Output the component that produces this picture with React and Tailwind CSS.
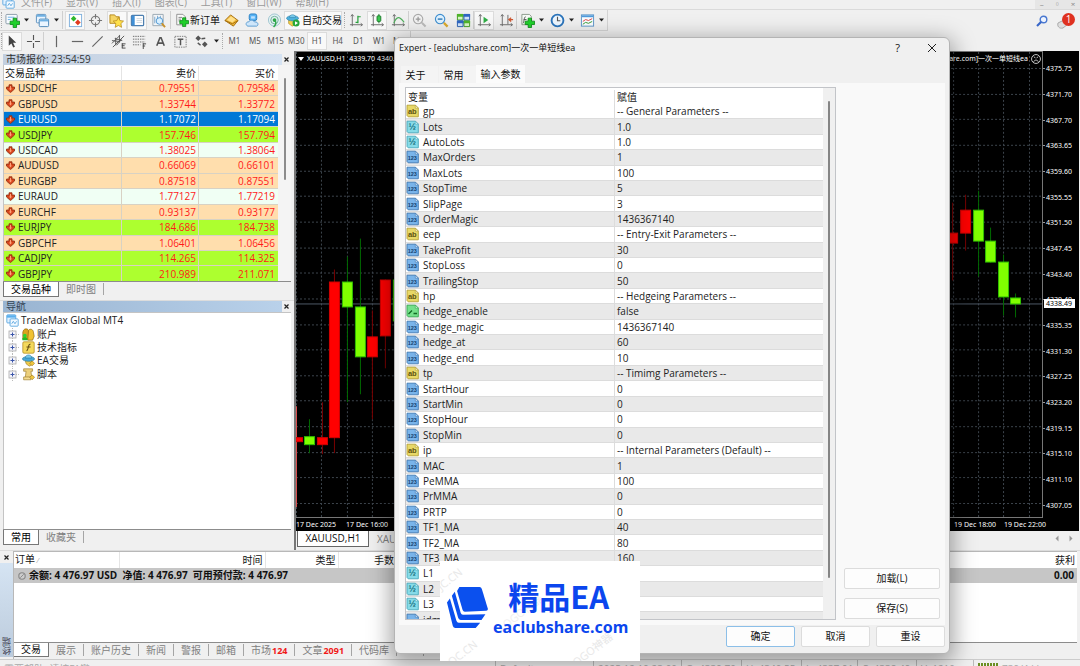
import React from 'react';

const quotes = [
  ['USDCHF', '0.79551', '0.79584', 'bg-[#ffdead]'],
  ['GBPUSD', '1.33744', '1.33772', 'bg-[#ffdead]'],
  ['EURUSD', '1.17072', '1.17094', 'bg-[#0078d7]'],
  ['USDJPY', '157.746', '157.794', 'bg-[#adff2f]'],
  ['USDCAD', '1.38025', '1.38064', 'bg-[#f0fff4]'],
  ['AUDUSD', '0.66069', '0.66101', 'bg-[#ffdead]'],
  ['EURGBP', '0.87518', '0.87551', 'bg-[#ffdead]'],
  ['EURAUD', '1.77127', '1.77219', 'bg-[#f0fff4]'],
  ['EURCHF', '0.93137', '0.93177', 'bg-[#ffdead]'],
  ['EURJPY', '184.686', '184.738', 'bg-[#adff2f]'],
  ['GBPCHF', '1.06401', '1.06456', 'bg-[#ffdead]'],
  ['CADJPY', '114.265', '114.325', 'bg-[#adff2f]'],
  ['GBPJPY', '210.989', '211.071', 'bg-[#adff2f]'],
];

const params = [
  ['ab', 'gp', '-- General Parameters --'],
  ['half', 'Lots', '1.0'],
  ['half', 'AutoLots', '1.0'],
  ['num', 'MaxOrders', '1'],
  ['num', 'MaxLots', '100'],
  ['num', 'StopTime', '5'],
  ['num', 'SlipPage', '3'],
  ['num', 'OrderMagic', '1436367140'],
  ['ab', 'eep', '-- Entry-Exit Parameters --'],
  ['num', 'TakeProfit', '30'],
  ['num', 'StopLoss', '0'],
  ['num', 'TrailingStop', '50'],
  ['ab', 'hp', '-- Hedgeing Parameters --'],
  ['bool', 'hedge_enable', 'false'],
  ['num', 'hedge_magic', '1436367140'],
  ['num', 'hedge_at', '60'],
  ['num', 'hedge_end', '10'],
  ['ab', 'tp', '-- Timimg Parameters --'],
  ['num', 'StartHour', '0'],
  ['num', 'StartMin', '0'],
  ['num', 'StopHour', '0'],
  ['num', 'StopMin', '0'],
  ['ab', 'ip', '-- Internal Parameters (Default) --'],
  ['num', 'MAC', '1'],
  ['num', 'PeMMA', '100'],
  ['num', 'PrMMA', '0'],
  ['num', 'PRTP', '0'],
  ['num', 'TF1_MA', '40'],
  ['num', 'TF2_MA', '80'],
  ['num', 'TF3_MA', '160'],
  ['half', 'L1', ''],
  ['half', 'L2', ''],
  ['half', 'L3', ''],
  ['num', 'idm', ''],
];

const prices = ['4375.75', '4371.70', '4367.70', '4363.65', '4359.60', '4355.55', '4351.50', '4347.45', '4343.40', '4339.40', '4335.35', '4331.30', '4327.25', '4323.20', '4319.15', '4315.10', '4311.10', '4307.05'];

// x, open/close top, bottom, wick top, wick bottom, direction (plot coordinates)
const candles = [
  [-4, 386, 391, 386, 391, 'r'],
  [8, 385, 394, 368, 402, 'g'],
  [21, 386, 394, 351, 403, 'r'],
  [33, 230, 387, 218, 402, 'r'],
  [46, 230, 256, 205, 351, 'g'],
  [59, 255, 306, 187, 343, 'g'],
  [71, 285, 306, 259, 368, 'r'],
  [84, 228, 285, 228, 317, 'r'],
  [97, 228, 270, 220, 290, 'g'],
  [652, 181, 192, 151, 229, 'r'],
  [665, 158, 182, 143, 199, 'r'],
  [678, 158, 190, 139, 225, 'g'],
  [690, 189, 211, 176, 211, 'g'],
  [703, 210, 246, 203, 264, 'g'],
  [715, 246, 253, 242, 266, 'g'],
];

const Svg = ({ children, size = 16, className = '' }) => (
  <svg width={size} height={size} viewBox="0 0 16 16" fill="none" className={`shrink-0 ${className}`} aria-hidden="true">{children}</svg>
);

const Plus = ({ x = 5, y = 5 }) => (
  <path transform={`translate(${x} ${y})`} d="M3.700 0.500h3.600v3.200h3.200v3.600h-3.200v3.200h-3.600v-3.200h-3.200v-3.600h3.200z" fill="#1fd02a" stroke="#0d8a18" strokeWidth=".9" />
);

const Axes = () => <path d="M3.500 2v12M1 12.500h13M2 3.500l1.500-2 1.500 2M12.500 11l2 1.500-2 1.500" stroke="#6b6b6b" />;

const icons = {
  newChart: <><rect x="1" y="1.500" width="12" height="10" rx="1" fill="#f7fbff" stroke="#8a9aa8" /><path d="M3 4.500h7M3 7h3" stroke="#6bb3e8" /><Plus /></>,
  windows: <><rect x="1.500" y="1.500" width="10" height="9" rx="1" fill="#eaf5ff" stroke="#5b8fbd" /><path d="M2 3h9" stroke="#6fb1e3" strokeWidth="2" /><rect x="4.500" y="6.500" width="10" height="8" rx="1" fill="#eaf5ff" stroke="#4b86b8" /><path d="M5 8h9" stroke="#6fb1e3" strokeWidth="2" /></>,
  market: <><rect x="1.500" y="1.500" width="13" height="13" fill="#fff" stroke="#7fb0dc" /><path d="M6 3l3 3-3 3-3-3z" fill="#2eb82e" /><path d="M10.500 7l3 3-3 3-3-3z" fill="#e03a1e" /></>,
  cross: <><circle cx="8" cy="8" r="4.500" stroke="#777" strokeWidth="1.200" /><path d="M8 1v5M8 10v5M1 8h5M10 8h5" stroke="#777" strokeWidth="1.200" /></>,
  starFolder: <><path d="M1 2h5l1.500 2H11v7H1z" fill="#f5d565" stroke="#b68a1d" /><path d="M10 4.500l1.700 3.600 3.800.5-2.800 2.700.7 4-3.400-2-3.400 2 .7-4-2.800-2.700 3.800-.5z" fill="#ffe14a" stroke="#b68a1d" strokeWidth=".8" /></>,
  panel: <><rect x="1.500" y="2.500" width="13" height="11" rx="1" fill="#fff" stroke="#4d7fb0" strokeWidth="1.300" /><rect x="2" y="3" width="3" height="10" fill="#3f8fd6" /><path d="M7 6h6M7 8h6M7 10h6" stroke="#cfd8e0" /></>,
  tester: <><path d="M2 1.500h11v12H2z" fill="#f4f6f8" stroke="#9aa7b2" /><path d="M4 4v7M7 3v4M10 3v3" stroke="#7aa6cc" /><circle cx="9" cy="8.500" r="3.500" fill="#d8efff" stroke="#4d94cf" /><path d="M11.500 11l3.500 4" stroke="#c8912a" strokeWidth="2" /></>,
  order: <><path d="M2 1.500h7l3 3v9H2z" fill="#fafafa" stroke="#888" /><path d="M4 5h4M4 7h3M4 9h2" stroke="#777" /><Plus /></>,
  gold: <><path d="M1 8l6-6 8 6-5 6z" fill="#f0b93a" stroke="#a36e10" /><path d="M1 8l8 3.500L15 8" stroke="#a36e10" /><path d="M3 7.500l4.500-4 5 3.500-3.500 3z" fill="#ffe08a" /></>,
  cloud: <><rect x="4.500" y="1" width="8" height="7" rx="2" fill="#58b3f5" stroke="#287fc2" /><path d="M6.500 3.500h4v2.500h-4z" fill="#bfe3ff" /><path d="M3 14c-3-1-2-5 1-4.500 1-2.500 5-2.500 6 0 4-.5 5 3.500 2.500 4.500z" fill="#cfe6fa" stroke="#5b9bd0" /></>,
  signal: <><circle cx="8" cy="7.500" r="6.500" fill="#e4f1f3" stroke="#9dc4cf" /><circle cx="8" cy="7.500" r="4" stroke="#6fae9b" /><circle cx="8" cy="7.500" r="2" fill="#2fa84a" /><path d="M8 8c3 2 1 5-1 7" stroke="#2fa84a" strokeWidth="1.600" /></>,
  auto: <><path d="M3 7h9l-1 6-4 2-4-3z" fill="#f2cf4a" stroke="#ad8419" strokeWidth=".7" /><ellipse cx="7.500" cy="6" rx="6.800" ry="3" fill="#4eb0dd" stroke="#2a7fa8" strokeWidth=".7" /><path d="M4 5c0-4 7-4 7 0z" fill="#7fd0f0" stroke="#2a7fa8" strokeWidth=".7" /><circle cx="11.500" cy="11.500" r="4" fill="#28a838" /><path d="M10.300 9.300l3.400 2.200-3.400 2.200z" fill="#fff" /></>,
  bars: <><Axes /><path d="M9.500 3v8M9.500 4h3M7 10h2.500" stroke="#28a03c" strokeWidth="1.300" /></>,
  candles: <><Axes /><path d="M9.500 1v10" stroke="#1c7a2c" /><rect x="7.500" y="3" width="4" height="6" rx="1" fill="#3cc850" stroke="#1c7a2c" /></>,
  line: <><Axes /><path d="M3 11c3-8 6-8 11-1" stroke="#4fae5c" strokeWidth="1.200" /></>,
  zoomIn: <><circle cx="6.500" cy="6.500" r="5" fill="#f2f2f2" stroke="#aaa" strokeWidth="1.200" /><path d="M4 6.500h5M6.500 4v5" stroke="#999" strokeWidth="1.300" /><path d="M10.500 10.500l4 4" stroke="#bbb" strokeWidth="2.200" /></>,
  zoomOut: <><circle cx="6.500" cy="6.500" r="5" fill="#dff2ff" stroke="#3e8ed0" strokeWidth="1.200" /><path d="M4 6.500h5" stroke="#2f79b8" strokeWidth="1.500" /><path d="M10.500 10.500l4 4" stroke="#d9a92e" strokeWidth="2.400" /></>,
  tile: <><path d="M1.500 1.500h6v6h-6zM8.500 8.500h6v6h-6z" fill="#d7f5c8" stroke="#3f9c1f" /><path d="M8.500 1.500h6v6h-6zM1.500 8.500h6v6h-6z" fill="#cfe3fb" stroke="#2a5fb0" /><path d="M1 2.500h7M8 9.500h7" stroke="#4fb52a" strokeWidth="3" /><path d="M8 2.500h7M1 9.500h7" stroke="#2f66c4" strokeWidth="3" /></>,
  scroll: <><Axes /><path d="M7 4l5 3.500-5 3.500z" fill="#2fae45" /></>,
  shift: <><Axes /><path d="M9.500 2v10" stroke="#6b6b6b" /><path d="M15 7h-4m2-2l-2.500 2L13 9" stroke="#cf5730" strokeWidth="1.300" /></>,
  indicator: <><path d="M2 1.500h8l2 2v9H2z" fill="#f6fbf6" stroke="#8b9a8b" /><path d="M6 4c-2 0-1.500 7-3 7M4 7h3" stroke="#555" /><Plus /></>,
  clock: <><circle cx="8" cy="8" r="6.300" fill="#eef7ff" stroke="#2b74bb" strokeWidth="2" /><path d="M8 4v4.300h3" stroke="#555" strokeWidth="1.200" /></>,
  template: <><rect x="1.500" y="2" width="13" height="12" fill="#fafdff" stroke="#5a94c8" /><path d="M2 3.500h12" stroke="#4f9adb" strokeWidth="2" /><path d="M3 9l3-2 3 1 4-2" stroke="#d44" /><path d="M3 12l3-2 3 1 4-2" stroke="#393" /></>,
  cursor: <path d="M4 1.500v11l2.800-2.500 2 4.500 1.800-.8-2-4.400H12z" fill="#444" />,
  plusLine: <path d="M8 1v5.500M8 9.500V15M1 8h5.500M9.500 8H15" stroke="#555" strokeWidth="1.200" />,
  vline: <path d="M8 2v12" stroke="#666" strokeWidth="1.300" />,
  hline: <path d="M2 8h12" stroke="#666" strokeWidth="1.300" />,
  slash: <path d="M2.500 13.500l11-11" stroke="#666" strokeWidth="1.200" />,
  pitch: <><path d="M1 10l8-8M2 14L14 2M1 7l8 1M4 5l8 2M6 12l5-6M9 1v8M5 4v8" stroke="#555" /><path d="M11.500 10.500h4M11.500 12.500h3M11.500 15h4M12 10v5" stroke="#444" /></>,
  fib: <><path d="M1 2.500h13M1 5.500h13M1 8.500h13M1 11.500h8" stroke="#666" strokeDasharray="1.500 1" /><path d="M11.500 10.500H15M11.500 12.800H14M12 10v6" stroke="#444" /></>,
  textA: <path d="M4 12.500L7.400 4h1.200l3.400 8.500M5.500 9.700h5" stroke="#555" strokeWidth="1.700" />,
  textT: <><rect x="2" y="2.500" width="12" height="11.500" stroke="#777" strokeDasharray="1.500 1" /><path d="M5 5.500h6M8 5.500V12" stroke="#555" strokeWidth="1.600" /></>,
  shapes: <><path d="M4.500 1.500l3 3-3 3-3-3zM11.500 8l3 3-3 3-3-3z" fill="#555" /><path d="M8 5l4-.5M4 9.500l3 2.500" stroke="#555" strokeWidth="1.500" /></>,
};

const Icon = ({ name, size = 15 }) => <Svg size={size}>{icons[name]}</Svg>;

const Tool = ({ name, active }) => (
  <button aria-label={name} className={`flex h-[19px] w-5 shrink-0 items-center justify-center ${active ? 'border border-[#dcdcdc] bg-[#f9f9f9]' : ''}`}><Icon name={name} /></button>
);
const Caret = () => <svg width="10" height="6" viewBox="0 0 10 6" className="shrink-0"><path d="M2 1.500h5L4.500 4.500z" fill="#222" /></svg>;
const Sep = () => <span className="h-[18px] w-px shrink-0 bg-[#cfcfcf]" />;
const Grip = () => <span className="h-4 w-px shrink-0 border-l border-dotted border-[#aaa]" />;
const Close = ({ size = 9 }) => <svg width={size} height={size} viewBox="0 0 9 9"><path d="M2.500 2.500l4 4M6.500 2.500l-4 4" stroke="#222" strokeWidth="1.200" /></svg>;

const MtIcon = () => (
  <Svg size={13}><rect x="1" y="1" width="11" height="10" rx="1" fill="#dff0ff" stroke="#4d9fdc" /><path d="M1 3h11" stroke="#5ab0ee" strokeWidth="3" /><rect x="5" y="6" width="10" height="9" rx="1" fill="#f2f9ff" stroke="#4d9fdc" /><path d="M7 12l2-3 2 3 2-3" stroke="#4d9fdc" /></Svg>
);

const treeIcons = {
  accounts: <><path d="M2 2.500C4 0 8 1 8 3.500V14H1V5z" fill="#dba31c" stroke="#8d6508" strokeWidth=".8" /><path d="M8 3c2-3 6-1 6 2l1 5-2 5H7z" fill="#f1c232" stroke="#8d6508" strokeWidth=".8" /><circle cx="3.500" cy="9.500" r="2.300" fill="#2fd22f" /><path d="M.5 15v-2c1-2 5-2 6 0v2z" fill="#22bb22" /></>,
  func: <><rect x="1" y="1" width="14" height="14" rx="1.500" fill="#f4d95c" stroke="#b8922a" /><path d="M10.500 4C7 3 8.500 12 5.500 12M5.500 7.500h5" stroke="#665015" strokeWidth="1.300" /></>,
  expert: <><path d="M4 8h8l1 5-4 2-4-3z" fill="#ecc94b" stroke="#9a7418" strokeWidth=".7" /><ellipse cx="8" cy="6" rx="7.500" ry="3" fill="#48a8d8" stroke="#22789f" strokeWidth=".7" /><path d="M4 5c0-5 8-5 8 0z" fill="#76c8ec" stroke="#22789f" strokeWidth=".7" /><path d="M12.500 8.500l3 3-3 3-3-3z" fill="#f0c63c" stroke="#94701a" strokeWidth=".7" /></>,
  script: <><path d="M2 1h11v3h-2l1 8H4l1-8H2z" fill="#ecd07c" stroke="#9a7a2a" strokeWidth=".8" /><path d="M2 11h9v3.500H2z" fill="#f5dd90" stroke="#9a7a2a" strokeWidth=".8" /><path d="M12.500 8.500l3 3-3 3-3-3z" fill="#f0c63c" stroke="#94701a" strokeWidth=".7" /></>,
};

const typeStyle = {
  ab: ['#e8d866', '#b5a136', '#5c5210', 'ab'],
  half: ['#86dbe8', '#4aa9bb', '#15707f', '½'],
  num: ['#79b4ea', '#4079b3', '#12406f', '123'],
  bool: ['#74e08a', '#36a850', '#116a24', ''],
};
const TypeIcon = ({ type }) => {
  const [fill, stroke, ink, label] = typeStyle[type];
  return (
    <svg width="13" height="14" viewBox="0 0 13 14" className="shrink-0" aria-hidden="true">
      <path d="M1 1.200h8.500L12.300 4v8.800H2.200L1 11.500z" fill={fill} stroke={stroke} strokeWidth=".9" strokeLinejoin="round" />
      <path d="M9.300 1.200V4.200H12.300z" fill="#fff" fillOpacity=".7" stroke={stroke} strokeWidth=".6" />
      {type === 'bool' ? (
        <path d="M2.500 10L6 6.500m1.500 3h3.500" stroke={ink} strokeWidth="1.300" fill="none" />
      ) : (
        <text x="6.300" y={type === 'num' ? 9.500 : 9.800} textAnchor="middle" fontFamily="Liberation Sans" fontWeight="700" fontSize={type === 'ab' ? 7.500 : type === 'half' ? 9 : 5.500} fill={ink}>{label}</text>
      )}
    </svg>
  );
};

const Arrow = () => (
  <svg width="9" height="9" viewBox="0 0 9 9" className="shrink-0"><path d="M3 .8h3v2.200h2.500v2L4.500 8.600.5 5V3H3z" fill="#d9451c" stroke="#8e2c10" strokeWidth=".8" strokeLinejoin="round" /><path d="M4 2h1v2.500h1L4.500 6.500 3 4.500h1z" fill="#ffa27a" /></svg>
);

const Tabs = ({ items }) => (
  <div role="tablist" className="flex h-[15px] items-start border-t border-[#8c8c8c]">
    {items.map((t, i) => (
      <button key={t} role="tab" aria-selected={i === 0} className={i === 0
        ? 'h-[15px] border border-t-0 border-[#777] bg-white px-[7px] leading-[13px] text-black'
        : 'my-px h-[12px] border-r border-[#a5a5a5] px-[7px] leading-[12px] text-[#808080]'}>{t}</button>
    ))}
  </div>
);

function Toolbars() {
  const menus = ['文件(F)', '显示(V)', '插入(I)', '图表(C)', '工具(T)', '窗口(W)', '帮助(H)'];
  return (
    <header className="shrink-0 bg-[#f0f0f0]">
      <div className="flex h-[10px] items-end justify-between overflow-hidden border-b border-[#dadada]">
        <nav className="flex h-[14px] items-center gap-[14px] pl-[2px] text-[#9a9a9a]">
          <span className="-mr-2"><MtIcon /></span>
          {menus.map((m) => <button key={m} className="leading-[14px]">{m}</button>)}
        </nav>
        <div className="flex h-[10px] w-[45px] items-center justify-around bg-[#e6e6e6] text-[8px] leading-none text-[#888]">
          <button aria-label="最小化">–</button><button aria-label="还原">▫</button><button aria-label="关闭">×</button>
        </div>
      </div>
      <div className="flex h-[21px] items-center justify-between pr-1">
        <div className="flex h-[21px] items-center border-b border-r border-[#d4d4d4] pl-px">
          <Grip />
          <Tool name="newChart" /><Caret /><Tool name="windows" /><Caret />
          <Sep />
          <div className="flex w-[105px] justify-between pl-[2px]">
            <Tool name="market" active /><Tool name="cross" /><Tool name="starFolder" active /><Tool name="panel" active /><Tool name="tester" />
          </div>
          <span className="w-[2px]" /><Sep />
          <button className="flex w-[50px] items-center gap-px pl-1"><Icon name="order" size={14} /><span className="whitespace-nowrap">新订单</span></button>
          <div className="flex w-[63px] justify-between"><Tool name="gold" /><Tool name="cloud" /><Tool name="signal" /></div>
          <button className="flex h-[19px] w-[58px] items-center gap-[2px] border border-[#dcdcdc] bg-[#f9f9f9] pl-px"><Icon name="auto" size={14} /><span className="whitespace-nowrap">自动交易</span></button>
          <span className="w-[2px]" /><Grip />
          <div className="flex w-[63px] justify-between pl-px"><Tool name="bars" /><Tool name="candles" active /><Tool name="line" /></div>
          <Sep />
          <div className="flex w-[64px] justify-between"><Tool name="zoomIn" /><Tool name="zoomOut" /><Tool name="tile" /></div>
          <Sep />
          <div className="flex w-[42px] justify-between"><Tool name="scroll" active /><Tool name="shift" /></div>
          <Sep />
          <div className="flex items-center"><Tool name="indicator" /><Caret /><Tool name="clock" /><Caret /><Tool name="template" /><Caret /></div>
        </div>
        <div className="flex items-center gap-2">
          <button aria-label="搜索"><svg width="12" height="12" viewBox="0 0 12 12" fill="none"><circle cx="7.500" cy="4.500" r="3.300" fill="#eef4ff" stroke="#4a78d0" strokeWidth="1.400" /><path d="M5 7l-4 4" stroke="#3766c8" strokeWidth="2.200" /></svg></button>
          <button aria-label="通知" className="flex items-center"><svg width="20" height="18" viewBox="0 0 20 18"><path d="M2 11l6-3 4 4-5 4c-4 1-6-2-5-5z" fill="#dedede" stroke="#aaa" /><circle cx="12.500" cy="7.500" r="6.500" fill="#df3120" /><text x="12.500" y="11" textAnchor="middle" fontSize="10" fontFamily="Open Sans" fill="#fff">1</text></svg></button>
        </div>
      </div>
      <div className="flex h-[20px] items-center text-[8px] text-[#555]">
        <div className="flex h-[20px] items-center pl-px">
          <Grip /><Tool name="cursor" active /><span className="w-px" /><Tool name="plusLine" /><Sep />
          <div className="grid w-[168px] grid-cols-8 justify-items-center pl-[2px]">
            {['vline', 'hline', 'slash', 'pitch', 'fib', 'textA', 'textT', 'shapes'].map((n) => <Tool key={n} name={n} />)}
          </div>
          <Caret /><Grip />
        </div>
        <div className="ml-px grid h-[20px] w-[187px] grid-cols-9 items-center border-r border-[#d0d0d0]">
          {['M1', 'M5', 'M15', 'M30', 'H1', 'H4', 'D1', 'W1', 'MN'].map((t) => (
            <button key={t} className={`h-[18px] font-["Noto_Sans"] ${t === 'H1' ? 'border border-[#dcdcdc] bg-[#f9f9f9]' : ''}`}>{t}</button>
          ))}
        </div>
      </div>
    </header>
  );
}

function MarketWatch() {
  return (
    <section className="pl-[3px] pr-[3px] pt-[2px]">
      <div className="flex h-[12px] items-center justify-between">
        <h2 className="h-[11px] flex-1 bg-gradient-to-r from-[#c3cfdf] to-[#d5e3f3] pl-[3px] leading-[11px] text-[#333]">市场报价: 23:54:59</h2>
        <button aria-label="关闭"><Close /></button>
      </div>
      <div className="flex border-l border-[#c4c4c4] bg-[#f4f4f4]">
        <div className="flex-1 bg-white pt-px">
          <table className="h-[215px] w-full table-fixed border-collapse leading-[14px]">
            <colgroup><col className="w-[43%]" /><col className="w-[28%]" /><col /></colgroup>
            <thead><tr><th className="border-r border-[#e4e4e4] pl-px text-left font-normal">交易品种</th><th className="border-r border-[#e4e4e4] pr-[2px] text-right font-normal">卖价</th><th className="pr-[3px] text-right font-normal">买价</th></tr></thead>
            <tbody>
              {quotes.map(([s, b, a, bg]) => {
                const sel = s === 'EURUSD';
                const num = `text-right ${sel ? 'text-white' : 'text-[#ff1a1a]'}`;
                return (
                  <tr key={s} className={`border-t border-[#d8d2c4] ${bg}`}>
                    <td className={`border-r border-[#d8d2c4] pl-[2px] ${sel ? 'text-white' : 'text-[#222]'}`}><span className="flex items-center gap-[3px]"><Arrow />{s}</span></td>
                    <td className={`border-r border-[#d8d2c4] pr-[2px] ${num}`}>{b}</td>
                    <td className={`pr-[3px] ${num}`}>{a}</td>
                  </tr>
                );
              })}
            </tbody>
          </table>
        </div>
        <div className="flex w-[13px] justify-center pt-[13px]"><span className="h-[102px] w-[2px] rounded bg-[#8c8c8c]" /></div>
      </div>
      <Tabs items={['交易品种', '即时图']} />
    </section>
  );
}

function Navigator() {
  const nodes = [['accounts', '账户'], ['func', '技术指标'], ['expert', 'EA交易'], ['script', '脚本']];
  return (
    <section className="mt-1 flex min-h-0 flex-1 flex-col border-t border-[#dcdcdc] px-[3px] pb-[6px]">
      <div className="flex h-[11px] shrink-0 items-center justify-between">
        <h2 className="h-[11px] flex-1 bg-gradient-to-r from-[#99b4d1] to-[#b9d1ea] pl-[3px] leading-[11px] text-[#345]">导航</h2>
        <button aria-label="关闭"><Close /></button>
      </div>
      <div className="min-h-0 flex-1 border-l border-t border-[#c4c4c4] bg-white pl-[2px] pt-px">
        <ul className="grid h-[67px] auto-rows-fr text-[#222]">
          <li className="flex items-center gap-[2px]"><MtIcon />TradeMax Global MT4</li>
          {nodes.map(([k, n]) => (
            <li key={k} className="flex items-center gap-[2px] pl-[2px]">
              <button aria-label={`展开 ${n}`} className="flex items-center"><svg width="12" height="13" viewBox="0 0 12 13"><path d="M4.500 0v13M8 6.500h4" stroke="#bbb" strokeDasharray="1 1" /><rect x="1" y="3" width="7" height="7" fill="#f4f4fa" stroke="#aaa" strokeWidth=".8" /><path d="M2.500 6.500h4M4.500 4.500v4" stroke="#3a55a8" /></svg></button>
              <Svg size={13}>{treeIcons[k]}</Svg>{n}
            </li>
          ))}
        </ul>
      </div>
      <Tabs items={['常用', '收藏夹']} />
    </section>
  );
}

function Chart() {
  const gx = Array.from({ length: 30 }, (_, i) => 0.5 + Math.round(i * 25.3));
  const gy = prices.map((_, i) => 16.5 + Math.round(i * 25.65));
  return (
    <section className="flex min-w-0 flex-1 flex-col">
      <div className="mr-px flex h-[480px] flex-col bg-black font-['Noto_Sans','Noto_Sans_CJK_SC',sans-serif] text-[7px] text-white">
        <div className="flex h-[467px]">
          <div className="relative min-w-0 flex-1 border-b border-r border-t border-[#777]">
            <svg className="absolute inset-0 h-full w-full" viewBox="0 0 747 466" preserveAspectRatio="none">
              <g stroke="#3d454d" strokeDasharray="2 2">
                {gx.map((x) => <path key={x} d={`M${x} 0V466`} />)}
                {gy.map((y) => <path key={y} d={`M0 ${y}H747`} />)}
              </g>
              <path d="M.5 355V456" stroke="#e05050" />
              <path d="M0 252.500H747" stroke="#4d5866" />
              {candles.map(([x, t, b, wt, wb, d]) => (
                <g key={x}>
                  <path d={`M${x + 5.5} ${wt}V${wb}`} stroke={d === 'r' ? '#7a0000' : '#006a00'} />
                  <rect x={x + 0.5} y={t + 0.5} width="10" height={b - t - 1} fill={d === 'r' ? '#ff0000' : '#80ff00'} stroke={d === 'r' ? '#d00000' : '#30c000'} />
                </g>
              ))}
            </svg>
            <div className="relative flex h-[13px] items-center justify-between pl-[2px] pr-px leading-[13px]">
              <span className="flex items-center gap-[3px]"><svg width="6" height="4" viewBox="0 0 6 4"><path d="M0 0h6L3 4z" fill="#fff" /></svg>XAUUSD,H1&nbsp; 4339.70 4340.55 4337.91 4338.49</span>
              <span className="flex items-center gap-[3px]">[eaclubshare.com]一次一单短线ea
                <svg width="10" height="10" viewBox="0 0 9 9" fill="none" stroke="#ddd" strokeWidth=".8"><circle cx="4.500" cy="4.500" r="4" /><path d="M2.500 7c.5-2 3.500-2 4 0M2.500 2.500l1.500 1M6.500 2.500L5 3.500" /></svg>
              </span>
            </div>
          </div>
          <div className="relative flex w-[36px] flex-col pt-[5px]">
            {prices.map((p) => <div key={p} className="flex flex-1 items-center leading-none"><span className="mr-px h-px w-[2px] bg-[#999]" />{p}</div>)}
            <div className="absolute left-px top-[248px] h-[9px] w-[31px] bg-white pl-[2px] leading-[9px] text-black">4338.49</div>
          </div>
        </div>
        <div className="flex flex-1 items-center justify-between pr-[33px] leading-none">
          <div className="flex gap-[10px]"><span>17 Dec 2025</span><span>17 Dec 16:00</span></div>
          <div className="flex gap-2"><span>19 Dec 18:00</span><span>19 Dec 22:00</span></div>
        </div>
      </div>
      <div className="flex h-[17px] items-start justify-between">
        <div role="tablist" className="flex items-center">
          <button role="tab" aria-selected="true" className="ml-px h-[16px] w-[72px] border border-t-0 border-[#666] bg-white leading-[15px]">XAUUSD,H1</button>
          <button role="tab" className="h-[16px] pl-2 leading-[15px] text-[#808080]">XAUUSD,M15</button>
        </div>
        <div className="flex gap-[10px] pr-[6px] pt-1"><svg width="5" height="7" viewBox="0 0 5 7"><path d="M4.500 .5v6L1.500 3.500z" fill="#999" /></svg><svg width="5" height="7" viewBox="0 0 5 7"><path d="M.5 .5v6L3.500 3.500z" fill="#999" /></svg></div>
      </div>
    </section>
  );
}

function Terminal() {
  const tabs = [['交易'], ['展示'], ['账户历史'], ['新闻'], ['警报'], ['邮箱'], ['市场', '124'], ['文章', '2091'], ['代码库'], ['EA']];
  return (
    <section className="flex h-[109px] shrink-0 border-t border-[#dcdcdc] pr-[3px]">
      <div className="flex w-[13px] flex-col items-center">
        <button aria-label="关闭" className="h-[12px]"><Close /></button>
        <div className="mb-[2px] flex flex-1 items-end justify-center self-stretch bg-gradient-to-b from-[#d5e4f3] to-[#bccbdc] pb-[2px]"><span className="rotate-180 text-[9px] leading-[11px] text-[#445] [writing-mode:vertical-rl]">终端</span></div>
      </div>
      <div className="flex min-w-0 flex-1 flex-col border-l border-t border-[#b8b8b8] bg-white">
        <table className="w-full table-fixed border-collapse leading-[15px]">
          <colgroup><col className="w-[105px]" /><col className="w-[146px]" /><col className="w-[73px]" /><col className="w-[58px]" /><col /></colgroup>
          <thead><tr className="font-normal">
            <th className="border-r border-[#e5e5e5] pl-px text-left font-normal">订单 <span className="text-[7px] text-[#999]">⁄</span></th>
            <th className="border-r border-[#e5e5e5] pr-[2px] text-right font-normal">时间</th>
            <th className="border-r border-[#e5e5e5] pr-[2px] text-right font-normal">类型</th>
            <th className="pr-[2px] text-right font-normal">手数</th>
            <th className="pr-[2px] text-right font-normal">获利</th>
          </tr></thead>
          <tbody><tr className="bg-[#c6c6c6] font-bold">
            <td colSpan={4} className="whitespace-nowrap pl-1"><span className="flex items-center gap-[3px]"><svg width="8" height="8" viewBox="0 0 7 7"><circle cx="3.500" cy="3.500" r="2.800" fill="#ccc" stroke="#888" /><path d="M2 5l3-3" stroke="#888" strokeWidth=".8" /></svg><span>余额: 4 476.97 USD&nbsp; 净值: 4 476.97&nbsp; 可用预付款: 4 476.97</span></span></td>
            <td className="pr-[3px] text-right">0.00</td>
          </tr></tbody>
        </table>
        <div className="flex-1" />
        <div className="bg-[#f0f0f0] pb-[2px]">
          <div role="tablist" className="flex h-[15px] items-start border-t border-[#8c8c8c]">
            {tabs.map(([t, n], i) => (
              <button key={t} role="tab" aria-selected={i === 0} className={i === 0
                ? 'h-[14px] border-b border-r border-[#777] bg-white px-[7px] leading-[13px]'
                : 'my-px h-[12px] whitespace-nowrap border-r border-[#a5a5a5] px-[7px] leading-[12px] text-[#808080]'}>
                {t}{n && <b className="pl-px text-[9px] text-[#f01818]">{n}</b>}
              </button>
            ))}
          </div>
        </div>
      </div>
    </section>
  );
}

function ExpertDialog() {
  const btn = 'h-[21px] rounded-[2px] border border-[#dcdcdc] bg-[#fdfdfd]';
  return (
    <div role="dialog" aria-label="Expert" className="absolute left-[394px] top-[37px] flex h-[617px] w-[556px] flex-col rounded-[6px] border border-[#b4b4b4] bg-[#f0f0f0] px-1 shadow-[0_6px_22px_4px_rgba(0,0,0,0.35)]">
      <div className="flex h-[20px] shrink-0 items-center justify-between pr-2">
        <h1 className="text-[9px]">Expert - [eaclubshare.com]一次一单短线ea</h1>
        <div className="flex items-center gap-[27px]">
          <button aria-label="帮助" className="text-[11px]">?</button>
          <button aria-label="关闭"><svg width="10" height="10" viewBox="0 0 10 10"><path d="M1 1l8 8M9 1L1 9" stroke="#222" /></svg></button>
        </div>
      </div>
      <div role="tablist" className="mt-[7px] flex h-[18px] shrink-0 items-end pl-[2px]">
        <button role="tab" className="mr-px h-[17px] w-[37px] bg-[#f4f4f4] pr-2 pt-px">关于</button>
        <button role="tab" className="h-[17px] w-[37px] bg-[#f4f4f4] pr-2 pt-px">常用</button>
        <button role="tab" aria-selected="true" className="h-[18px] w-[49px] bg-[#fbfbfb]">输入参数</button>
      </div>
      <div className="flex h-[542px] shrink-0 justify-between bg-[#f9f9f9] pb-[5px] pl-[6px] pr-[5px] pt-1">
        <div className="flex w-[431px] overflow-hidden border border-[#c2c4c8] bg-white">
          <div className="min-w-0 flex-1 overflow-hidden pt-[2px]">
            <table className="h-[538px] w-full table-fixed border-collapse leading-[14px] text-[#222]">
              <colgroup><col className="w-1/2" /><col /></colgroup>
              <thead><tr><th className="border-r border-[#ddd] pl-[2px] text-left font-normal">变量</th><th className="pl-[2px] text-left font-normal">赋值</th></tr></thead>
              <tbody>
                {params.map(([t, n, v], i) => (
                  <tr key={n} className={i % 2 ? 'bg-[#e9e9e9]' : 'bg-white'}>
                    <td className="border-b border-r border-[#dcdcdc]"><span className="flex items-center gap-1"><TypeIcon type={t} />{n}</span></td>
                    <td className="border-b border-[#dcdcdc] pl-[2px]">{v}</td>
                  </tr>
                ))}
              </tbody>
            </table>
          </div>
          <div className="flex w-[12px] shrink-0 justify-center bg-[#f0f0f0] pt-[13px]"><span className="h-[477px] w-[2px] rounded bg-[#858585]" /></div>
        </div>
        <div className="flex w-[96px] flex-col justify-end gap-[9px] pb-px">
          <button className={btn}>加载(L)</button>
          <button className={btn}>保存(S)</button>
        </div>
      </div>
      <div className="flex justify-end gap-[6px] pt-px">
        <button className="h-[21px] w-[69px] rounded-[2px] border border-[#8cbfe8] bg-[#fdfdfd]">确定</button>
        <button className={`${btn} w-[69px]`}>取消</button>
        <button className={`${btn} w-[69px]`}>重设</button>
      </div>
    </div>
  );
}

function Brand() {
  return (
    <div className="absolute left-[440px] top-[561px] flex h-[100px] w-[200px] items-center gap-1 overflow-hidden bg-white pb-1 pl-[6px]">
      <span className="absolute -left-1 top-[10px] -rotate-[38deg] text-[11px] text-[#e8e8e8]">JC.CN</span>
      <span className="absolute left-[6px] top-[84px] -rotate-[38deg] text-[11px] text-[#e8e8e8]">QC.CN</span>
      <span className="absolute left-[124px] top-[82px] -rotate-[38deg] text-[11px] text-[#e8e8e8]">LOGO神器</span>
      <span className="absolute left-[54px] top-[44px] -rotate-[38deg] text-[11px] text-[#f0f0f0]">LOGO神器</span>
      <svg width="43" height="43" viewBox="46 138 130 132" fill="#0b50ee" className="relative mb-1 shrink-0">
        <path d="M86 141H148Q153 141 155 147L173 206Q175 213 168 214L103 217Q98 217 96 212L79 153Z" />
        <path d="M72 156L63 168L82 235Q84 242 90 242H154L166 225L97 226Q92 226 90 220Z" />
        <path d="M57 176L48 189L66 261Q68 267 74 267H136L150 251L84 251Q79 251 77 245Z" />
      </svg>
      <div className="relative flex flex-col items-center text-[#0b46ee]">
        <strong className="pr-1 font-['Noto_Sans_CJK_SC',sans-serif] text-[31px] leading-[32px]">精品EA</strong>
        <strong className="pt-[3px] font-['Noto_Sans',sans-serif] text-[16px] leading-[24px]">eaclubshare.com</strong>
      </div>
    </div>
  );
}

export default function App() {
  return (
    <div className="relative flex h-screen w-full flex-col overflow-hidden bg-[#f0f0f0] font-['Open_Sans','Noto_Sans_CJK_SC',sans-serif] text-[10px] text-[#111]">
      <Toolbars />
      <main className="flex min-h-0 flex-1">
        <aside className="flex w-[296px] shrink-0 flex-col border-r-2 border-[#777]">
          <MarketWatch />
          <Navigator />
        </aside>
        <Chart />
      </main>
      <Terminal />
      <footer className="flex h-[7px] shrink-0 items-start justify-between overflow-hidden border-t border-[#ccc] pl-1 leading-[18px] text-[#aaa]">
        <span>需要帮助, 请按F1键</span>
        <div className="grid w-[585px] grid-cols-[98px_88px_60px_60px_56px_59px_57px_1fr] [&>span]:whitespace-nowrap [&>span]:border-l [&>span]:border-[#bbb] [&>span]:pl-1">
          <span>Default</span><span>2025.12.19 23:00</span><span>O: 4339.70</span><span>H: 4340.55</span><span>L: 4337.91</span><span>C: 4338.49</span><span>V: 1210</span>
          <span className="flex gap-1"><svg width="20" height="8" viewBox="0 0 20 8" className="mt-[3px]"><path d="M1 0v8M4 0v8M7 0v8M10 0v8M13 0v8M16 0v8M19 0v8" stroke="#6b8e23" strokeWidth="2" /></svg>739/4 kb</span>
        </div>
      </footer>
      <ExpertDialog />
      <Brand />
    </div>
  );
}
